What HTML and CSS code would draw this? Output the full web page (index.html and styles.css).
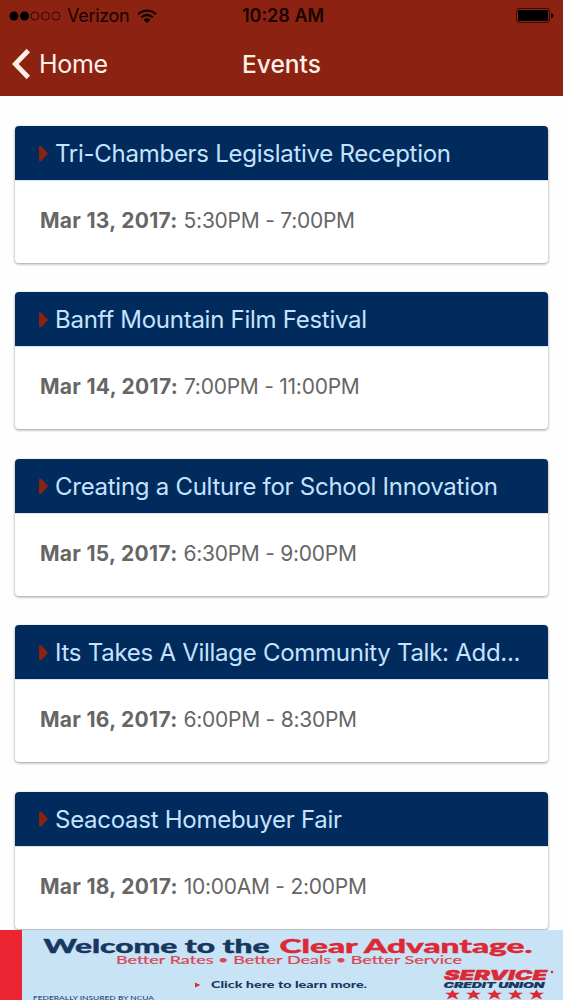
FILE: index.html
```html
<!DOCTYPE html>
<html lang="en">
<head>
    <meta charset="UTF-8">
    <meta name="viewport" content="width=device-width, initial-scale=1.0">
    <title>Events</title>
    <link rel="stylesheet" href="styles.css">
</head>
<body>
    <header class="top">
        <div class="status-bar">
            <div class="carrier">
                <svg class="signal" width="52" height="10" viewBox="0 0 52 10">
                    <circle cx="5" cy="5" r="4.5"/>
                    <circle cx="15.5" cy="5" r="4.5"/>
                    <circle class="empty" cx="26" cy="5" r="4"/>
                    <circle class="empty" cx="36.5" cy="5" r="4"/>
                    <circle class="empty" cx="47" cy="5" r="4"/>
                </svg>
                <span class="carrier-name">Verizon</span>
                <svg class="wifi" width="20" height="14" viewBox="0 0 20 14">
                    <path class="arc" d="M1.2 5.2A12.6 12.6 0 0 1 18.8 5.2"/>
                    <path class="arc" d="M4.3 8.3A8.2 8.2 0 0 1 15.7 8.3"/>
                    <path d="M6.7 10.7A4.7 4.7 0 0 1 13.3 10.7L10 14Z"/>
                </svg>
            </div>
            <div class="clock">10:28 AM</div>
            <svg class="battery" width="38" height="15" viewBox="0 0 38 15">
                <rect class="outline" x=".5" y=".5" width="33" height="14" rx="2.5"/>
                <rect x="2" y="2" width="30" height="11" rx="1"/>
                <path d="M35 5Q37.5 5.5 37.5 7.5Q37.5 9.5 35 10Z"/>
            </svg>
        </div>
        <nav class="nav-bar">
            <a class="back" href="#">
                <svg class="chevron" width="18" height="30" viewBox="0 0 18 30">
                    <path d="M16.3 1.5L3.3 15L16.3 28.5"/>
                </svg>
                <span class="back-label">Home</span>
            </a>
            <h1 class="page-title">Events</h1>
        </nav>
    </header>

    <main class="events">
        <article class="card">
            <h2 class="card-header"><i class="caret"></i><span class="name">Tri-Chambers Legislative Reception</span></h2>
            <p class="card-body"><b>Mar 13, 2017:</b> <span>5:30PM - 7:00PM</span></p>
        </article>
        <article class="card">
            <h2 class="card-header"><i class="caret"></i><span class="name">Banff Mountain Film Festival</span></h2>
            <p class="card-body"><b>Mar 14, 2017:</b> <span>7:00PM - 11:00PM</span></p>
        </article>
        <article class="card">
            <h2 class="card-header"><i class="caret"></i><span class="name">Creating a Culture for School Innovation</span></h2>
            <p class="card-body"><b>Mar 15, 2017:</b> <span>6:30PM - 9:00PM</span></p>
        </article>
        <article class="card">
            <h2 class="card-header"><i class="caret"></i><span class="name">Its Takes A Village Community Talk: Add...</span></h2>
            <p class="card-body"><b>Mar 16, 2017:</b> <span>6:00PM - 8:30PM</span></p>
        </article>
        <article class="card">
            <h2 class="card-header"><i class="caret"></i><span class="name">Seacoast Homebuyer Fair</span></h2>
            <p class="card-body"><b>Mar 18, 2017:</b> <span>10:00AM - 2:00PM</span></p>
        </article>
    </main>

    <!-- Sponsor banner -->
    <a class="banner" href="#">
        <svg width="563" height="70" viewBox="0 0 563 70">
            <rect class="stripe" width="22" height="70"/>
            <text class="headline" x="43.5" y="22.5" textLength="226" lengthAdjust="spacingAndGlyphs">Welcome to the</text>
            <text class="headline red" x="279.5" y="22.5" textLength="253" lengthAdjust="spacingAndGlyphs">Clear Advantage.</text>
            <text class="tagline" x="116" y="33.5" textLength="346" lengthAdjust="spacingAndGlyphs">Better Rates • Better Deals • Better Service</text>
            <path class="red" d="M195 52.5L200.5 55L195 57.5Z"/>
            <text class="link" x="211" y="58" textLength="156" lengthAdjust="spacingAndGlyphs">Click here to learn more.</text>
            <text class="legal" x="33" y="70" textLength="121" lengthAdjust="spacingAndGlyphs">FEDERALLY INSURED BY NCUA</text>
            <text class="logo-top" x="444" y="50" textLength="103" lengthAdjust="spacingAndGlyphs">SERVICE</text>
            <circle class="red" cx="552" cy="42" r="1.3"/>
            <text class="logo-bottom" x="443.5" y="58.2" textLength="101" lengthAdjust="spacingAndGlyphs">CREDIT UNION</text>
            <g class="red">
                <path id="star" d="M452.5 59.5L454.5 62.7H460L455.8 65.2L458 69.5L452.5 67L447 69.5L449.2 65.2L445 62.7H450.5Z"/>
                <use href="#star" x="21"/>
                <use href="#star" x="42"/>
                <use href="#star" x="63"/>
                <use href="#star" x="84"/>
            </g>
        </svg>
    </a>
</body>
</html>
```
FILE: styles.css
```css
* {
    box-sizing: border-box;
}
body {
    margin: 0;
    height: 1000px;
    display: flex;
    flex-direction: column;
    overflow: hidden;
    background-color: #fefefe;
    font-family: Inter, "Liberation Sans", sans-serif;
}
.top {
    flex: none;
    height: 96px;
    background-color: #8c2212;
}

/* status bar */
.status-bar {
    height: 31px;
    padding: 0 9px;
    display: grid;
    grid-template-columns: 1fr auto 1fr;
    align-items: center;
    color: #180200;
    font-size: 18px;
}
.carrier {
    display: flex;
    align-items: center;
}
.carrier-name {
    margin-left: 6px;
    letter-spacing: -0.3px;
}
.wifi {
    margin-left: 8px;
}
.signal .empty,
.wifi .arc,
.battery .outline {
    fill: none;
    stroke: #180200;
}
.signal .empty {
    stroke-width: 0.8;
}
.wifi .arc {
    stroke-width: 2.3;
}
.clock {
    padding-left: 3px;
    font-weight: 600;
}
.battery {
    justify-self: end;
}
.battery .outline {
    stroke-width: 0.7;
}

/* navigation */
.nav-bar {
    height: 65px;
    padding: 0 12px;
    display: grid;
    grid-template-columns: 1fr auto 1fr;
    align-items: center;
    color: #fff0e8;
    font-size: 25px;
}
.back {
    display: flex;
    align-items: center;
    gap: 9px;
    color: inherit;
    text-decoration: none;
}
.back-label {
    letter-spacing: -0.3px;
}
.chevron {
    fill: none;
    stroke: #fff0e8;
    stroke-width: 4.8;
}
.page-title {
    margin: 0;
    font-size: 24.5px;
    font-weight: 500;
}

/* event list */
.events {
    flex: none;
    height: 834px;
    padding: 30px 15px 0;
    display: flex;
    flex-direction: column;
    gap: 29.4px;
    overflow: hidden;
}
.card {
    flex: none;
    height: 137px;
    border-radius: 4px;
    background-color: #fff;
    box-shadow: 0 1px 3px rgba(0, 0, 0, 0.4);
    overflow: hidden;
}
.card-header {
    margin: 0;
    height: 54px;
    padding: 1px 24px 0;
    display: flex;
    align-items: center;
    background-color: #002b5c;
    color: #c6e2ff;
    font-size: 24px;
    font-weight: 400;
    letter-spacing: -0.27px;
    white-space: nowrap;
}
.caret {
    width: 9px;
    height: 15px;
    margin-right: 7px;
    background-color: #8c2212;
    clip-path: polygon(0 0, 25% 0, 100% 50%, 25% 100%, 0 100%);
}
.card-body {
    margin: 0;
    height: 83px;
    padding: 0 25px;
    border-top: 1px solid #dbe3f0;
    color: #666;
    font-size: 21px;
    line-height: 80px;
    white-space: nowrap;
}
.card-body b {
    letter-spacing: 0.3px;
}
.card-body span {
    letter-spacing: -0.25px;
}

/* banner */
.banner {
    flex: none;
    height: 70px;
    background-color: #c8e3f5;
}
.banner svg {
    display: block;
}
.banner text {
    font-family: Lato, sans-serif;
    fill: #17375f;
}
.banner .stripe {
    fill: #ec2532;
}
.banner .red {
    fill: #dc2935;
}
.banner .headline {
    font-size: 18px;
    font-weight: 900;
    stroke: #17375f;
    stroke-width: 0.4;
}
.banner .headline.red {
    stroke: #dc2935;
}
.banner .tagline {
    font-size: 11px;
    fill: #d94755;
    stroke: #d94755;
    stroke-width: 0.2;
}
.banner .link {
    font-size: 9.5px;
    font-weight: 900;
}
.banner .legal {
    font-size: 6px;
}
.banner .logo-top,
.banner .logo-bottom {
    font-family: Inter, sans-serif;
    font-style: italic;
    font-weight: 900;
}
.banner .logo-top {
    font-size: 13.5px;
    fill: #dc2935;
    stroke: #dc2935;
    stroke-width: 0.4;
}
.banner .logo-bottom {
    font-size: 8px;
    stroke: #17375f;
    stroke-width: 0.2;
}
```
